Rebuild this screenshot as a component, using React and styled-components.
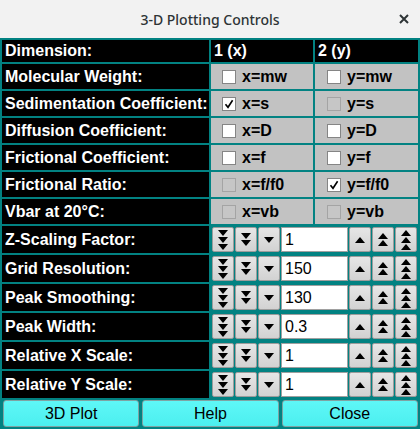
import React from "react";
import styled, { createGlobalStyle } from "styled-components";

const Global = createGlobalStyle`
  html, body { margin: 0; padding: 0; background: #ffffff; }
  * { box-sizing: border-box; }
`;

const Window = styled.div`
  width: 420px;
  height: 429px;
  display: flex;
  flex-direction: column;
  overflow: hidden;
  font-family: "Liberation Sans", Arial, sans-serif;
`;

const TitleBar = styled.div`
  height: 38px;
  flex: none;
  background: #f2f2f2;
  display: flex;
  align-items: center;
  justify-content: center;
  position: relative;
  color: #2e3436;
  font-family: "Noto Sans", "DejaVu Sans", sans-serif;
  font-size: 14px;
  font-weight: 500;
`;

const CloseBtn = styled.div`
  position: absolute;
  right: 11px;
  top: 14px;
  width: 10px;
  height: 10px;
  display: flex;
`;

const Body = styled.div`
  flex: 1;
  background: #028282;
  padding: 2px;
  display: grid;
  grid-template-columns: 207px 102px 103px;
  grid-auto-rows: auto;
  gap: 2px;
`;

const Label = styled.div`
  background: #000;
  color: #fff;
  font-weight: bold;
  font-size: 16px;
  height: ${(p) => p.$h}px;
  display: flex;
  align-items: center;
  padding-left: 3px;
  white-space: nowrap;
`;

const CheckCell = styled.div`
  background: #c2c2c2;
  height: 25px;
  display: flex;
  align-items: center;
  padding-left: ${(p) => p.$pad}px;
  gap: 6px;
  font-weight: bold;
  font-size: 16px;
  color: #000;
`;

const Box = styled.div`
  width: 14px;
  height: 14px;
  border: 1px solid ${(p) => (p.$disabled ? "#a4a4a4" : "#858585")};
  background: ${(p) => (p.$disabled ? "#c6c6c6" : "#ffffff")};
  display: flex;
  align-items: center;
  justify-content: center;
`;

const Counter = styled.div`
  grid-column: 2 / 4;
  height: 27px;
  padding: 1px 1px;
  display: grid;
  grid-template-columns: 22px 22px 22px 1fr 22px 22px 22px;
  gap: 1px;
`;

const ArrowBtn = styled.div`
  border: 1px solid #9c9c9c;
  border-radius: 2px;
  background: linear-gradient(#e6e6e6, #d2d2d2);
  display: flex;
  align-items: center;
  justify-content: center;
`;

const Edit = styled.div`
  background: #fff;
  border: 1px solid #a0a0a0;
  display: flex;
  align-items: center;
  padding-left: 3px;
  font-size: 16px;
  color: #000;
`;

const ButtonRow = styled.div`
  grid-column: 1 / -1;
  display: grid;
  grid-template-columns: repeat(3, 1fr);
  gap: 3px;
  height: 27px;
  padding: 0 0 0 1px;
`;

const PushButton = styled.div`
  background: linear-gradient(#5ef7f7, #4cefef);
  border: 1px solid #7fa3a3;
  border-radius: 3px;
  display: flex;
  align-items: center;
  justify-content: center;
  font-size: 16px;
  color: #000;
`;

const Arrows = ({ n, up }) => {
  const h = 6,
    pitch = 7,
    w = 10;
  const total = (n - 1) * pitch + h;
  const tris = [];
  for (let i = 0; i < n; i++) {
    const y = i * pitch;
    tris.push(
      up ? (
        <polygon key={i} points={`0,${y + h} ${w},${y + h} ${w / 2},${y}`} />
      ) : (
        <polygon key={i} points={`0,${y} ${w},${y} ${w / 2},${y + h}`} />
      )
    );
  }
  return (
    <svg width={w} height={total} viewBox={`0 0 ${w} ${total}`} fill="#000">
      {tris}
    </svg>
  );
};

const Check = ({ checked, disabled, pad, text }) => (
  <CheckCell $pad={pad}>
    <Box $disabled={disabled}>
      {checked ? (
        <svg width="10" height="10" viewBox="0 0 10 10">
          <path d="M1.5 5.2 L4 8.3 L8.6 1.2" stroke="#000" strokeWidth="1.6" fill="none" />
        </svg>
      ) : null}
    </Box>
    <span>{text}</span>
  </CheckCell>
);

const checkRows = [
  ["Molecular Weight:", ["x=mw", false, false], ["y=mw", false, false]],
  ["Sedimentation Coefficient:", ["x=s", true, false], ["y=s", false, true]],
  ["Diffusion Coefficient:", ["x=D", false, false], ["y=D", false, false]],
  ["Frictional Coefficient:", ["x=f", false, false], ["y=f", false, false]],
  ["Frictional Ratio:", ["x=f/f0", false, true], ["y=f/f0", true, false]],
  ["Vbar at 20°C:", ["x=vb", false, true], ["y=vb", false, true]],
];

const counterRows = [
  ["Z-Scaling Factor:", "1"],
  ["Grid Resolution:", "150"],
  ["Peak Smoothing:", "130"],
  ["Peak Width:", "0.3"],
  ["Relative X Scale:", "1"],
  ["Relative Y Scale:", "1"],
];

export default function App() {
  return (
    <Window>
      <Global />
      <TitleBar>
        3-D Plotting Controls
        <CloseBtn>
          <svg width="10" height="10" viewBox="0 0 10 10">
            <path d="M1 1 L9 9 M9 1 L1 9" stroke="#2e3436" strokeWidth="2" />
          </svg>
        </CloseBtn>
      </TitleBar>
      <Body>
        <Label $h={22}>Dimension:</Label>
        <Label $h={22}>1 (x)</Label>
        <Label $h={22}>2 (y)</Label>
        {checkRows.map(([label, a, b]) => (
          <React.Fragment key={label}>
            <Label $h={25}>{label}</Label>
            <Check pad={11} text={a[0]} checked={a[1]} disabled={a[2]} />
            <Check pad={12} text={b[0]} checked={b[1]} disabled={b[2]} />
          </React.Fragment>
        ))}
        {counterRows.map(([label, val]) => (
          <React.Fragment key={label}>
            <Label $h={27}>{label}</Label>
            <Counter>
              <ArrowBtn><Arrows n={3} /></ArrowBtn>
              <ArrowBtn><Arrows n={2} /></ArrowBtn>
              <ArrowBtn><Arrows n={1} /></ArrowBtn>
              <Edit>{val}</Edit>
              <ArrowBtn><Arrows n={1} up /></ArrowBtn>
              <ArrowBtn><Arrows n={2} up /></ArrowBtn>
              <ArrowBtn><Arrows n={3} up /></ArrowBtn>
            </Counter>
          </React.Fragment>
        ))}
        <ButtonRow>
          <PushButton>3D Plot</PushButton>
          <PushButton>Help</PushButton>
          <PushButton>Close</PushButton>
        </ButtonRow>
      </Body>
    </Window>
  );
}
